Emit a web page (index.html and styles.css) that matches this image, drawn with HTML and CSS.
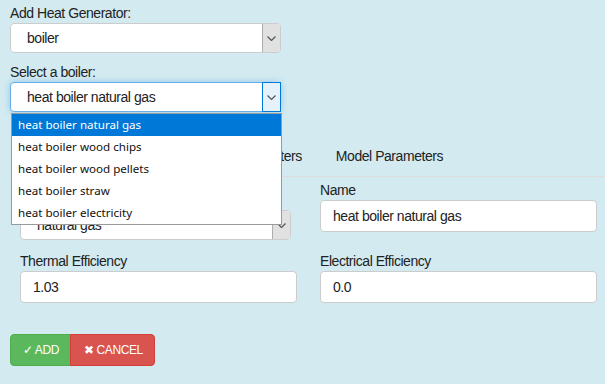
FILE: index.html
```html
<!DOCTYPE html>
<html lang="en">

<head>
    <meta charset="UTF-8">
    <meta name="viewport" content="width=device-width, initial-scale=1.0">
    <title>Add Heat Generator</title>
    <link rel="stylesheet" href="styles.css">
</head>

<body>
    <div class="container">
        <label class="field-label">Add Heat Generator:</label>
        <div class="select">
            <span class="select-value">boiler</span>
            <span class="select-arrow">
                <svg width="9" height="5" viewBox="0 0 9 5"><polyline points="0.5,0.5 4.5,4.5 8.5,0.5" /></svg>
            </span>
        </div>

        <label class="field-label spaced">Select a boiler:</label>
        <div class="select-wrap">
            <div class="select focused">
                <span class="select-value">heat boiler natural gas</span>
                <span class="select-arrow">
                    <svg width="9" height="5" viewBox="0 0 9 5"><polyline points="0.5,0.5 4.5,4.5 8.5,0.5" /></svg>
                </span>
            </div>
            <!-- open option list -->
            <ul class="dropdown">
                <li class="selected">heat boiler natural gas</li>
                <li>heat boiler wood chips</li>
                <li>heat boiler wood pellets</li>
                <li>heat boiler straw</li>
                <li>heat boiler electricity</li>
            </ul>
        </div>

        <div class="panel">
            <ul class="nav-tabs">
                <li class="active"><a>Heat Generator</a></li>
                <li><a>Technical Parameters</a></li>
                <li><a>Model Parameters</a></li>
            </ul>

            <div class="tab-content">
                <div class="form-group">
                    <label class="field-label">Fuel Type</label>
                    <div class="select small">
                        <span class="select-value">natural gas</span>
                        <span class="select-arrow">
                            <svg width="9" height="5" viewBox="0 0 9 5"><polyline points="0.5,0.5 4.5,4.5 8.5,0.5" /></svg>
                        </span>
                    </div>
                </div>
                <div class="form-group">
                    <label class="field-label" for="name">Name</label>
                    <input type="text" id="name" value="heat boiler natural gas">
                </div>
                <div class="form-group">
                    <label class="field-label" for="thermal">Thermal Efficiency</label>
                    <input type="text" id="thermal" value="1.03">
                </div>
                <div class="form-group">
                    <label class="field-label" for="electrical">Electrical Efficiency</label>
                    <input type="text" id="electrical" value="0.0">
                </div>
            </div>
        </div>

        <div class="btn-group">
            <button class="btn btn-add">&#10003; ADD</button>
            <button class="btn btn-cancel">&#10006; CANCEL</button>
        </div>
    </div>
</body>

</html>
```

FILE: styles.css
```css
html {
    overflow: hidden;
}

body {
    font-family: "Liberation Sans", Arial, sans-serif;
    font-size: 14px;
    letter-spacing: -0.45px;
    background-color: #d3eaf0;
    color: #222;
    margin: 0;
}

.container {
    padding: 4px 10px 0;
}

.field-label {
    display: block;
    line-height: 19px;
    color: #222;
}

.field-label.spaced {
    margin-top: 10px;
}

.select {
    display: flex;
    width: 271px;
    height: 30px;
    box-sizing: border-box;
    background: #fff;
    border: 1px solid #ccc;
    border-radius: 4px;
}

.select-value {
    flex: 1;
    padding-left: 16px;
    line-height: 28px;
}

.select-arrow {
    width: 17px;
    display: flex;
    align-items: center;
    justify-content: center;
    background: #e1e1e1;
    border-left: 1px solid #adadad;
    border-radius: 0 3px 3px 0;
}

.select-arrow svg polyline {
    fill: none;
    stroke: #555;
    stroke-width: 1.2;
}

.select.focused {
    border-color: #66afe9;
    box-shadow: 0 0 6px rgba(102, 175, 233, 0.6);
}

.select.focused .select-arrow {
    background: #e5f1fb;
    border: 1px solid #0078d7;
    margin: -1px -1px -1px 0;
    border-radius: 0;
}

.select-wrap {
    position: relative;
}

.dropdown {
    position: absolute;
    top: 31px;
    left: 1px;
    z-index: 10;
    width: 271px;
    box-sizing: border-box;
    margin: 0;
    padding: 0;
    list-style: none;
    background: #fff;
    border: 1px solid #9a9a9a;
    font-family: "Noto Sans", sans-serif;
    font-size: 11.6px;
    letter-spacing: 0;
    color: #111;
}

.dropdown li {
    height: 22px;
    line-height: 21px;
    padding-left: 6px;
}

.dropdown li.selected {
    background: #0078d7;
    color: #fff;
}

.panel {
    width: 597px;
    margin-top: 23px;
}

.nav-tabs {
    display: flex;
    margin: 0;
    padding: 0 0 0 26px;
    list-style: none;
    border-bottom: 1px solid #ddd;
}

.nav-tabs li {
    margin: 0 2px -1px 0;
}

.nav-tabs a {
    display: block;
    padding: 10px 15px;
    line-height: 20px;
    border: 1px solid transparent;
    color: #222;
}

.nav-tabs li.active a {
    background: #fff;
    border-color: #ddd #ddd transparent;
    border-radius: 4px 4px 0 0;
}

.tab-content {
    display: grid;
    grid-template-columns: 277px 277px;
    grid-template-rows: 52px 52px;
    column-gap: 23px;
    row-gap: 19px;
    padding: 3px 10px 0;
}

.form-group .field-label {
    line-height: 20px;
}

.select.small {
    margin-top: 10px;
}

input[type="text"] {
    display: block;
    width: 100%;
    height: 32px;
    box-sizing: border-box;
    padding: 0 12px;
    font-family: inherit;
    font-size: 14px;
    letter-spacing: -0.45px;
    color: #222;
    background: #fff;
    border: 1px solid #ccc;
    border-radius: 4px;
}

.btn-group {
    display: flex;
    margin-top: 31px;
}

.btn {
    height: 32px;
    padding: 0 11px 0 12px;
    font-family: "Liberation Sans", Arial, sans-serif;
    font-size: 12px;
    letter-spacing: -0.4px;
    color: #fff;
    border: 1px solid;
    cursor: pointer;
}

.btn-add {
    background-color: #5cb85c;
    border-color: #4cae4c;
    border-radius: 4px 0 0 4px;
}

.btn-cancel {
    background-color: #d9534f;
    border-color: #d43f3a;
    border-radius: 0 4px 4px 0;
    margin-left: -1px;
    padding-left: 13px;
}
```
